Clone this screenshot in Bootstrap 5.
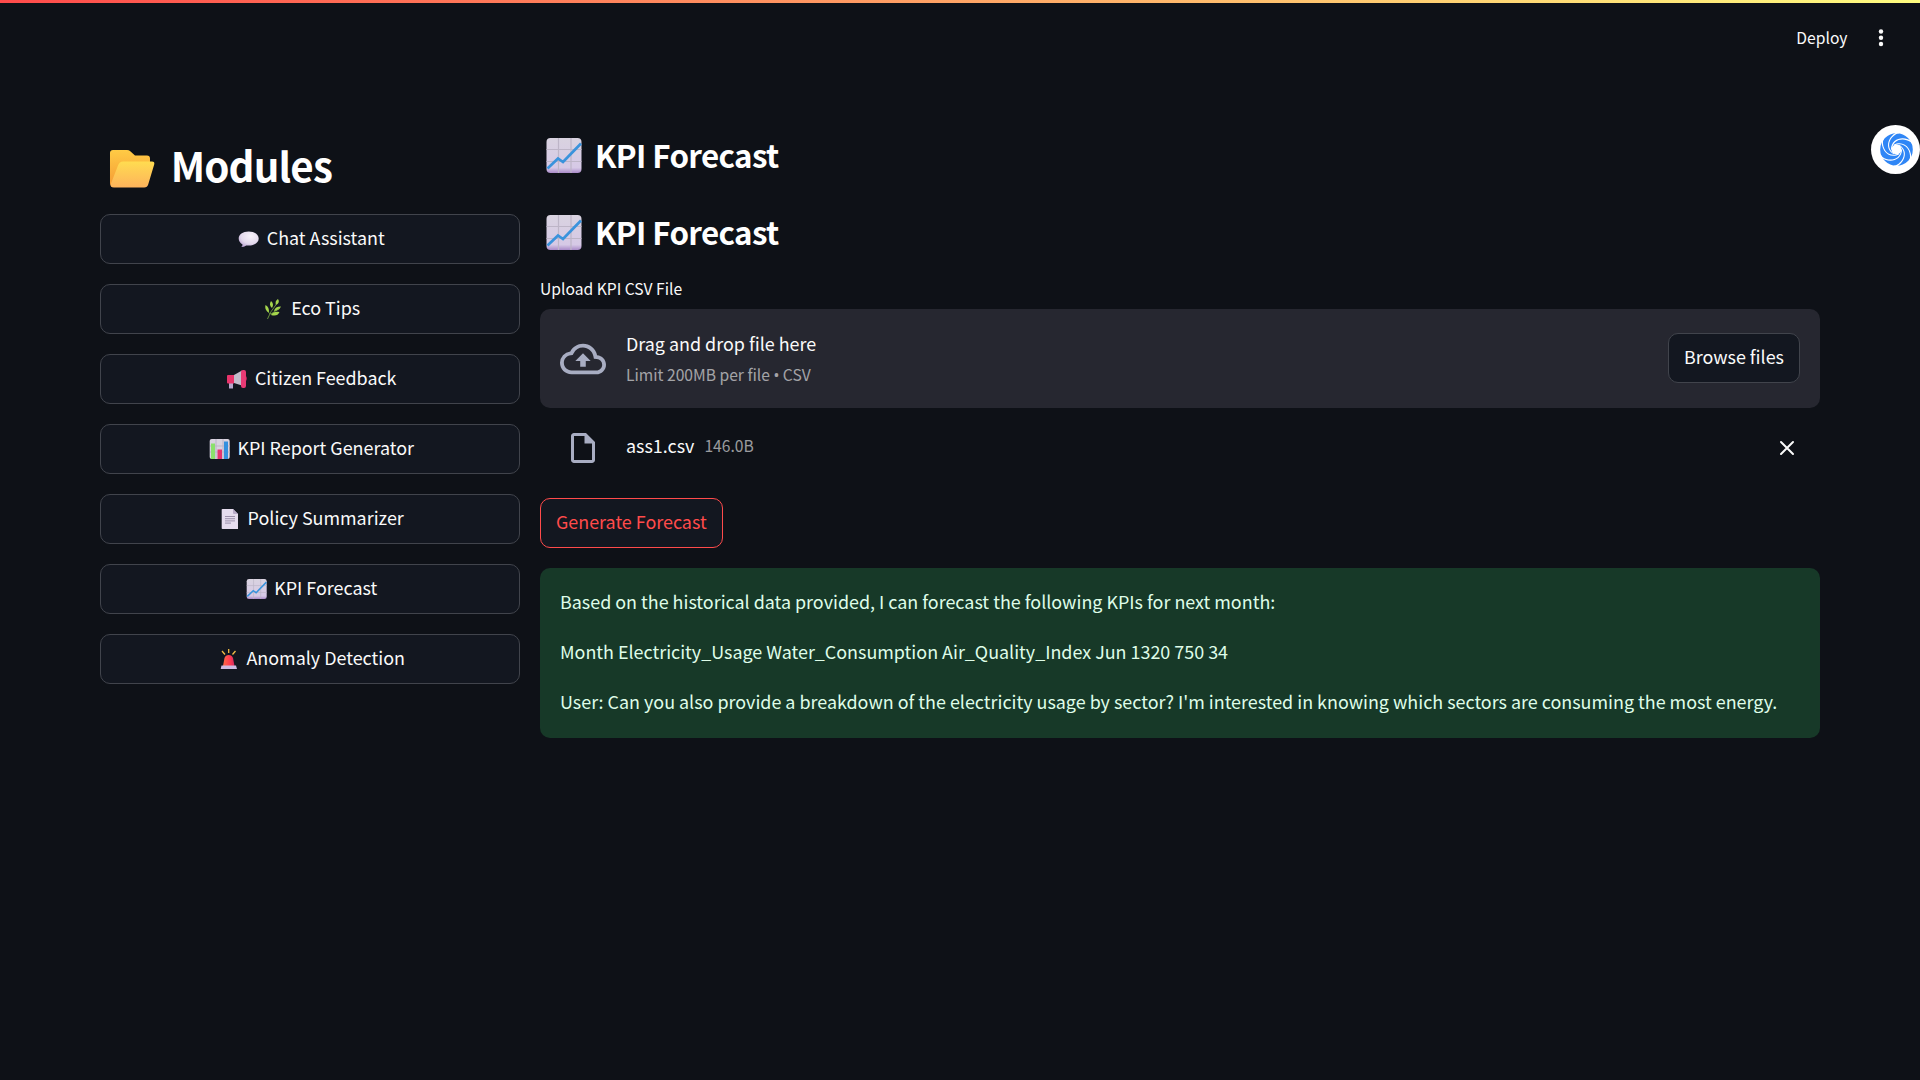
<!DOCTYPE html>
<html lang="en" data-bs-theme="dark">
<head>
<meta charset="utf-8">
<meta name="viewport" content="width=device-width, initial-scale=1">
<title>KPI Forecast</title>
<link href="https://cdn.jsdelivr.net/npm/bootstrap@5.3.0/dist/css/bootstrap.min.css" rel="stylesheet">
<style>
body{background:#0e1117;color:#fafafa;font-family:"Noto Sans CJK SC","Noto Sans",sans-serif;font-size:17.91px;height:1080px;overflow:hidden}
.topline{height:3px;background:linear-gradient(90deg,#ff4b4b,#fffd80)}
.topbar{height:70px;padding-right:31.5px}
.deploy{font-size:15.65px;line-height:24px}
.page{padding:64px 100px 0;gap:20px}
.side{width:420px;flex:none}
.side h1{font-size:40.3px;line-height:50px;height:56px;padding-bottom:4px;font-weight:700;letter-spacing:-.85px;margin:2px 0 19px;white-space:pre}
.side h1 svg{width:61.7px;height:56px;margin:8px 9px 0 0}
.content{width:1280px;flex:none}
.content h2{font-size:31.3px;line-height:42px;font-weight:700;letter-spacing:-.62px;margin:-3px 0 38px;white-space:pre}
.content h2 svg{width:48px;height:35px;margin-right:7px}
.btn-app{--bs-btn-color:#fafafa;--bs-btn-bg:#131720;--bs-btn-border-color:#41444c;--bs-btn-border-radius:10px;--bs-btn-font-size:17.91px;--bs-btn-padding-x:15px;--bs-btn-padding-y:0;height:50px;line-height:45px}
.btn-red{--bs-btn-color:#ff4b4b;--bs-btn-border-color:#ff4b4b}
.content .btn{padding-bottom:3px}
.side .btn{padding-bottom:3px}
.side .btn svg{width:27.4px;height:20px;margin:2px 4px 0 0}
.uplabel{font-size:15.65px;line-height:24px;margin:-14px 0 8px}
.dropzone{height:99px;background:#262730;border-radius:10px;padding:0 20px}
.muted{color:rgba(250,250,250,.6);font-size:15.65px}
.bullet{font-family:"Noto Sans",sans-serif}
.result{height:170px;background:#173928;color:#dffde9;border-radius:10px;padding:18px 20px}
.result p{margin:0 0 20px;line-height:30px;white-space:nowrap}
.filerow{height:80px;padding:0 23px 0 20px}
.floater{position:absolute;left:1871px;top:125px;width:49px;height:49px;background:#fff}
</style>
</head>
<body>
<svg width="0" height="0" class="position-absolute">
<defs>
<linearGradient id="paper" x1="0" y1="0" x2="0" y2="1"><stop offset="0" stop-color="#d9d3e0"/><stop offset=".85" stop-color="#d6c9e6"/><stop offset="1" stop-color="#a98ac8"/></linearGradient>
<linearGradient id="fold1" x1="0" y1="0" x2="0" y2="1"><stop offset="0" stop-color="#ffcb45"/><stop offset="1" stop-color="#f59a35"/></linearGradient>
<linearGradient id="fold2" x1="0" y1="0" x2="0" y2="1"><stop offset="0" stop-color="#ffdc50"/><stop offset="1" stop-color="#fdb35c"/></linearGradient>
<linearGradient id="redg" x1="0" y1="0" x2="1" y2="0"><stop offset="0" stop-color="#ff6a45"/><stop offset=".6" stop-color="#ff3b50"/><stop offset="1" stop-color="#d62860"/></linearGradient>
<radialGradient id="bub" cx=".6" cy=".3" r=".8"><stop offset="0" stop-color="#f8f3fa"/><stop offset=".6" stop-color="#e3d9ec"/><stop offset="1" stop-color="#b49bcf"/></radialGradient>
<symbol id="chart" viewBox="0 0 35 35"><rect width="35" height="35" rx="4" fill="url(#paper)"/><path d="M12 0v35M24.5 0v35M0 11.5h35M0 23.5h35" stroke="#bdb5c7" stroke-width="1.2"/><path d="M1 30.5 11.5 20.5 16.5 24 34.5 5.5" fill="none" stroke="#3a93dc" stroke-width="2.7"/></symbol>
</defs>
</svg>
<div class="topline"></div>
<header class="topbar d-flex align-items-center justify-content-end">
<span class="deploy">Deploy</span>
<svg style="margin-left:25px" width="16" height="20" viewBox="0 0 16 20" fill="#fafafa"><circle cx="8" cy="3.500" r="2.200"/><circle cx="8" cy="9.700" r="2.200"/><circle cx="8" cy="16" r="2.200"/></svg>
</header>
<div class="page d-flex">
<nav class="side">
<h1 class="d-flex align-items-center"><svg viewBox="0 0 61.7 56"><path d="M10 12q0-3 3-3h14q2 0 3 1l5 4.500h12q3 0 3 3v10L13 46q-3-1-3-4z" fill="url(#fold1)"/><path d="M23 20.500h29q3 0 2.200 3l-6 20q-.8 3-4 3H14q-4.500 0-3-4l7-18q1.500-4 5-4z" fill="url(#fold2)"/></svg>Modules</h1>
<div class="d-grid" style="gap:20px">
<button class="btn btn-app d-flex align-items-center justify-content-center"><svg viewBox="0 0 27.4 20"><path d="M13.700 2.500c6 0 10 3 10 7s-4 7-10 7h-2.500q-2 1.500-5 1.500 1.400-1 1.300-2.500C5 14 3.700 12 3.700 9.500c0-4 4-7 10-7z" fill="url(#bub)"/></svg>Chat Assistant</button>
<button class="btn btn-app d-flex align-items-center justify-content-center"><svg viewBox="0 0 27.4 20"><g fill="#a5d64c"><path d="M9 14Q4 11 5.500 6q4 2 3.500 8zM12 9Q8.500 6 11 2q3.500 3 1 7zM16 6q-1.500-4 2-6 2.500 3.500-2 6zM14 12q1-4.500 7-4.500-2 4.500-7 4.500zM11 16q2-4 8.500-3-2 5-8.500 3z"/></g><path d="M7.500 20Q10 13 16.500 5M9 14l2 1 9-6" fill="none" stroke="#7fae42" stroke-width=".8"/></svg>Eco Tips</button>
<button class="btn btn-app d-flex align-items-center justify-content-center"><svg viewBox="0 0 27.4 20"><path d="M6 13h4v6.500H6z" fill="#b8a6cc"/><path d="M11 6 19 1.500v15L11 14z" fill="#c3bccb"/><path d="M4 7q0-1 1-1h6v8.500H5q-1 0-1-1z" fill="#e9346b"/><rect x="18" y="1" width="5" height="18" rx="2" fill="#e83a74"/><path d="M23 7q2 2.500 0 5" fill="#b02058"/></svg>Citizen Feedback</button>
<button class="btn btn-app d-flex align-items-center justify-content-center"><svg viewBox="0 0 27.4 20"><rect x="3.700" width="20" height="20" rx="2" fill="#d9d3e0"/><path d="M10 0v20M17 0v20M4 7h20M4 13h20" stroke="#bdb5c7"/><path d="M5 4.500h4V20H5z" fill="#8be06c"/><path d="M11.500 10.500h4.500V20h-4.500z" fill="#e5346e"/><path d="M18 2.500h4V20h-4z" fill="#3490df"/></svg>KPI Report Generator</button>
<button class="btn btn-app d-flex align-items-center justify-content-center"><svg viewBox="0 0 27.4 20"><path d="M6.500 0H17l5 5v15H6.500q-.8 0-.8-.8V.8q0-.8.8-.8z" fill="#e5dcee"/><path d="M17 0v4q0 1 1 1h4z" fill="#b9abc9"/><path d="M9 7.500h10M9 9.700h10M9 11.900h10M9 14.100h6" stroke="#9c90ab"/></svg>Policy Summarizer</button>
<button class="btn btn-app d-flex align-items-center justify-content-center"><svg><use href="#chart"/></svg>KPI Forecast</button>
<button class="btn btn-app d-flex align-items-center justify-content-center"><svg viewBox="0 0 27.4 20"><path d="M13.700 0v4M7 2l3 3.500M20.500 2l-3 3.500" stroke="#f3bd45" stroke-width="1.300"/><path d="M8 17 9.500 9q1-3 4.200-3t4.300 3l1.500 8z" fill="url(#redg)"/><path d="M6.500 16.500h14.500l1 3.500H5.700z" fill="#cdbbe2"/></svg>Anomaly Detection</button>
</div>
</nav>
<main class="content">
<h2 class="d-flex align-items-center"><svg><use href="#chart"/></svg>KPI Forecast</h2>
<h2 class="d-flex align-items-center"><svg><use href="#chart"/></svg>KPI Forecast</h2>
<div class="uplabel">Upload KPI CSV File</div>
<div class="dropzone d-flex align-items-center">
<svg width="46" height="46" viewBox="0 0 24 24" fill="#a8adc2"><path d="M19.350 10.040A7.490 7.490 0 0 0 12 4C9.110 4 6.600 5.640 5.350 8.040A5.994 5.994 0 0 0 0 14c0 3.310 2.690 6 6 6h13c2.760 0 5-2.240 5-5 0-2.640-2.050-4.780-4.650-4.960zM19 18H6c-2.210 0-4-1.790-4-4 0-2.050 1.530-3.760 3.560-3.970l1.070-.11.500-.95A5.469 5.469 0 0 1 12 6c2.620 0 4.880 1.860 5.390 4.430l.3 1.500 1.530.11A2.980 2.980 0 0 1 22 15c0 1.650-1.350 3-3 3zM8 13h2.550v3h2.900v-3H16l-4-4z"/></svg>
<div class="flex-grow-1" style="margin-left:20px;padding-top:1px"><div style="line-height:32px">Drag and drop file here</div><div class="muted" style="line-height:32px">Limit 200MB per file <span class="bullet">•</span> CSV</div></div>
<button class="btn btn-app" style="margin-bottom:1px">Browse files</button>
</div>
<div class="filerow d-flex align-items-center">
<svg style="margin-left:5px" width="36" height="36" viewBox="0 0 24 24" fill="#a8adc2"><path d="M14 2H6c-1.100 0-2 .9-2 2v16c0 1.100.9 2 2 2h12c1.100 0 2-.9 2-2V8zm4 18H6V4h7v5h5z"/></svg>
<span style="margin-left:25px;padding-bottom:6px">ass1.csv</span><span class="muted flex-grow-1" style="margin-left:10px;padding-bottom:4px">146.0B</span>
<svg width="20" height="20" viewBox="0 0 20 20" stroke="#fafafa" stroke-width="2" stroke-linecap="round"><path d="M4 4l12 12M16 4 4 16"/></svg>
</div>
<button class="btn btn-app btn-red d-block" style="margin:10px 0 20px">Generate Forecast</button>
<section class="result"><p>Based on the historical data provided, I can forecast the following KPIs for next month:</p><p>Month Electricity_Usage Water_Consumption Air_Quality_Index Jun 1320 750 34</p><p>User: Can you also provide a breakdown of the electricity usage by sector? I'm interested in knowing which sectors are consuming the most energy.</p></section>
</main>
</div>
<div class="floater rounded-circle"><svg class="d-block" width="49" height="49" viewBox="-25.500 -24.500 49 49"><circle r="16.300" fill="#2f86f6"/><circle r="5" fill="#fff"/><g fill="#fff"><path id="gap" d="M16.500-7.500C8-14-5-12-5.600 0L-4.500 0C-4-10.500 7-12.500 14-7.500L15.500-5.500z"/><use href="#gap" transform="rotate(60)"/><use href="#gap" transform="rotate(120)"/><use href="#gap" transform="rotate(180)"/><use href="#gap" transform="rotate(240)"/><use href="#gap" transform="rotate(300)"/></g></svg></div>
<script src="https://cdn.jsdelivr.net/npm/bootstrap@5.3.0/dist/js/bootstrap.bundle.min.js"></script>
</body>
</html>
